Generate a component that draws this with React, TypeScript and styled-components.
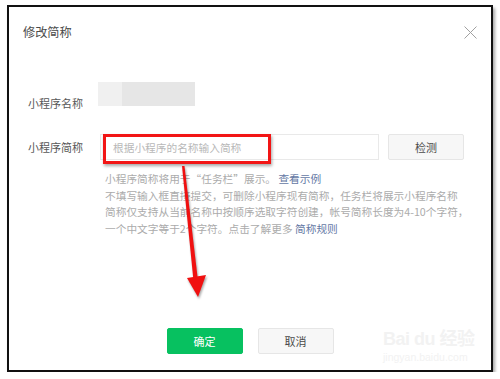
import { type ReactElement } from "react";

import styled, { createGlobalStyle } from "styled-components";

const GlobalStyle = createGlobalStyle`
	html, body {
		margin: 0;
		padding: 0;
		background: #ffffff;
	}

	body {
		font-family: "Noto Sans CJK SC", "Noto Sans", sans-serif;
	}
`;

const StyledFrame = styled.div({
	position: "relative",
	boxSizing: "border-box",
	display: "flex",
	flexDirection: "column",
	width: 486,
	height: 367,
	margin: "5px 0 0 7px",
	border: "2px solid #111111",
	boxShadow: "2px 3px 3px rgba(0, 0, 0, 0.35)",
	background: "#ffffff",
});

const StyledHeader = styled.div({
	display: "flex",
	alignItems: "center",
	justifyContent: "space-between",
	height: 50,
	padding: "0 14px",
});

const StyledTitle = styled.div({
	fontSize: 12.2,
	color: "#4a4a4a",
});

const StyledClose = styled.svg({
	display: "block",
	width: 13,
	height: 13,
});

const StyledBody = styled.div({
	padding: "25px 0 0 19px",
});

const StyledRow = styled.div<{ $top: number; $align: string }>`
	display: flex;
	align-items: ${({ $align }) => $align};
	margin-top: ${({ $top }) => $top}px;
`;

const StyledLabel = styled.div<{ $width: number; $offset?: number }>`
	width: ${({ $width }) => $width}px;
	margin-top: ${({ $offset = 0 }) => $offset}px;
	font-size: 11px;
	line-height: 16px;
	color: #575757;
	flex-shrink: 0;
`;

const StyledNameMask = styled.div({
	width: 97,
	height: 24,
	background: "linear-gradient(90deg, #f0f0f0 0 24px, #e6e6e6 24px 100%)",
});

const StyledField = styled.div({
	position: "relative",
	boxSizing: "border-box",
	display: "flex",
	alignItems: "center",
	width: 279,
	height: 26,
	paddingLeft: 12,
	border: "1px solid #e9e9e9",
	fontSize: 10.7,
	color: "#b8b8b8",
});

const StyledHighlight = styled.div({
	position: "absolute",
	left: 2,
	top: -1,
	width: 168,
	height: 30,
	boxSizing: "border-box",
	border: "3px solid #f21515",
	boxShadow: "1px 2px 3px rgba(0, 0, 0, 0.35)",
});

const StyledButton = styled.button<{ $primary?: boolean }>`
	box-sizing: border-box;
	width: 76px;
	height: 26px;
	padding: 0;
	border: 1px solid ${({ $primary }) => ($primary ? "#07c160" : "#e6e6e6")};
	border-radius: 2px;
	background: ${({ $primary }) => ($primary ? "#07c160" : "#f7f7f7")};
	color: ${({ $primary }) => ($primary ? "#ffffff" : "#4a4a4a")};
	font-family: "Noto Sans CJK SC", sans-serif;
	font-size: 11px;
	cursor: pointer;
`;

const StyledCheck = styled(StyledButton)({
	marginLeft: 9,
});

const StyledHelp = styled.div({
	margin: "11px 0 0 77px",
	fontSize: 10.7,
	lineHeight: "16.6px",
	color: "#ababab",
	whiteSpace: "nowrap",
});

const StyledLink = styled.a({
	color: "#6478a4",
	textDecoration: "none",
});

const StyledFooter = styled.div({
	display: "flex",
	justifyContent: "center",
	gap: 15,
	marginTop: "auto",
	paddingBottom: 16,
});

const StyledArrow = styled.svg({
	position: "absolute",
	left: 166,
	top: 155,
	width: 40,
	height: 150,
	filter: "drop-shadow(1px 2px 1px rgba(0, 0, 0, 0.35))",
});

const StyledWatermark = styled.div({
	position: "absolute",
	left: 374,
	top: 321,
	display: "flex",
	flexDirection: "column",
	alignItems: "flex-start",
	color: "#f2f2f2",
	fontFamily: "\"Liberation Sans\", \"Noto Sans CJK SC\", sans-serif",
	pointerEvents: "none",
});

const StyledMarkTop = styled.div({
	fontSize: 18,
	fontWeight: 700,
	lineHeight: "22px",
	letterSpacing: -0.5,
});

const StyledMarkBottom = styled.div({
	fontSize: 10.5,
	lineHeight: "14px",
});

export default function App(): ReactElement {
	return (
		<>
			<GlobalStyle />
			<StyledFrame>
				<StyledHeader>
					<StyledTitle>修改简称</StyledTitle>
					<StyledClose viewBox="0 0 13 13">
						<path d="M0.5 0.5 L12.5 12.5 M12.5 0.5 L0.5 12.5" stroke="#a0a0a0" strokeWidth="1" fill="none" />
					</StyledClose>
				</StyledHeader>

				<StyledBody>
					<StyledRow $top={0} $align="flex-start">
						<StyledLabel $width={70} $offset={13}>小程序名称</StyledLabel>
						<StyledNameMask />
					</StyledRow>

					<StyledRow $top={23} $align="center">
						<StyledLabel $width={72}>小程序简称</StyledLabel>
						<StyledField>
							根据小程序的名称输入简称
							<StyledHighlight />
						</StyledField>
						<StyledCheck type="button">检测</StyledCheck>
					</StyledRow>

					<StyledHelp>
						<div>
							小程序简称将用于“任务栏”展示。 <StyledLink href="#">查看示例</StyledLink>
						</div>
						<div>不填写输入框直接提交，可删除小程序现有简称，任务栏将展示小程序名称</div>
						<div>简称仅支持从当前名称中按顺序选取字符创建，帐号简称长度为4-10个字符，</div>
						<div>
							一个中文字等于2个字符。点击了解更多 <StyledLink href="#">简称规则</StyledLink>
						</div>
					</StyledHelp>
				</StyledBody>

				<StyledFooter>
					<StyledButton type="button" $primary>确定</StyledButton>
					<StyledButton type="button">取消</StyledButton>
				</StyledFooter>

				<StyledArrow viewBox="0 0 40 150">
					<polygon points="7,4 9.5,4 23,119 18.5,119" fill="#f01010" />
					<polygon points="12,116 23,135 31,113" fill="#f01010" />
				</StyledArrow>

				<StyledWatermark>
					<StyledMarkTop>Bai du 经验</StyledMarkTop>
					<StyledMarkBottom>jingyan.baidu.com</StyledMarkBottom>
				</StyledWatermark>
			</StyledFrame>
		</>
	);
}
